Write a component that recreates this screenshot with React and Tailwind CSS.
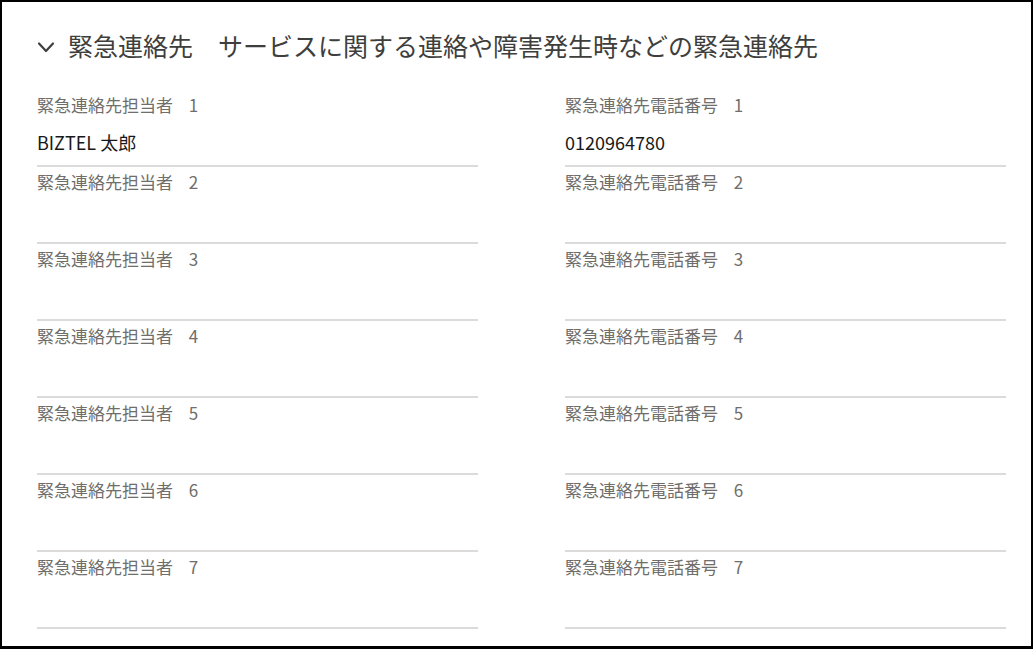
import React from "react";

const rows = [1, 2, 3, 4, 5, 6, 7];

function Field({ label, value }) {
  return (
    <div className="pt-[3px] pb-[11px] border-b-2 border-[#dddbda]">
      <div className="text-[17px] leading-[24px] text-[#706e6b] [word-spacing:12px] whitespace-nowrap">
        {label}
      </div>
      <div className="mt-[13px] h-[24px] text-[18px] leading-[24px] text-[#181818] whitespace-nowrap">
        {value}
      </div>
    </div>
  );
}

export default function App() {
  return (
    <div
      className="w-[1033px] h-[649px] bg-white border-2 border-b-[3px] border-black overflow-hidden"
      style={{ fontFamily: '"Noto Sans CJK JP", "Noto Sans", sans-serif' }}
    >
      <div className="pl-[35px] pr-[25px] pt-[25px]">
        <div className="flex items-center h-[36px]">
          <svg
            width="18"
            height="13"
            viewBox="0 0 18 13"
            className="mt-[5px] shrink-0"
            fill="none"
            stroke="#3e3e3c"
            strokeWidth="2.2"
            strokeLinecap="round"
            strokeLinejoin="round"
          >
            <path d="M2 2.5 L9 10 L16 2.5" />
          </svg>
          <div className="ml-[13px] text-[25px] leading-[36px] text-[#3e3e3c] whitespace-nowrap">
            緊急連絡先　サービスに関する連絡や障害発生時などの緊急連絡先
          </div>
        </div>
        <div className="mt-[27px] grid grid-cols-[441px_441px] gap-x-[87px]">
          {rows.map((n) => (
            <React.Fragment key={n}>
              <Field
                label={`緊急連絡先担当者 ${n}`}
                value={n === 1 ? "BIZTEL 太郎" : ""}
              />
              <Field
                label={`緊急連絡先電話番号 ${n}`}
                value={n === 1 ? "0120964780" : ""}
              />
            </React.Fragment>
          ))}
        </div>
      </div>
    </div>
  );
}
